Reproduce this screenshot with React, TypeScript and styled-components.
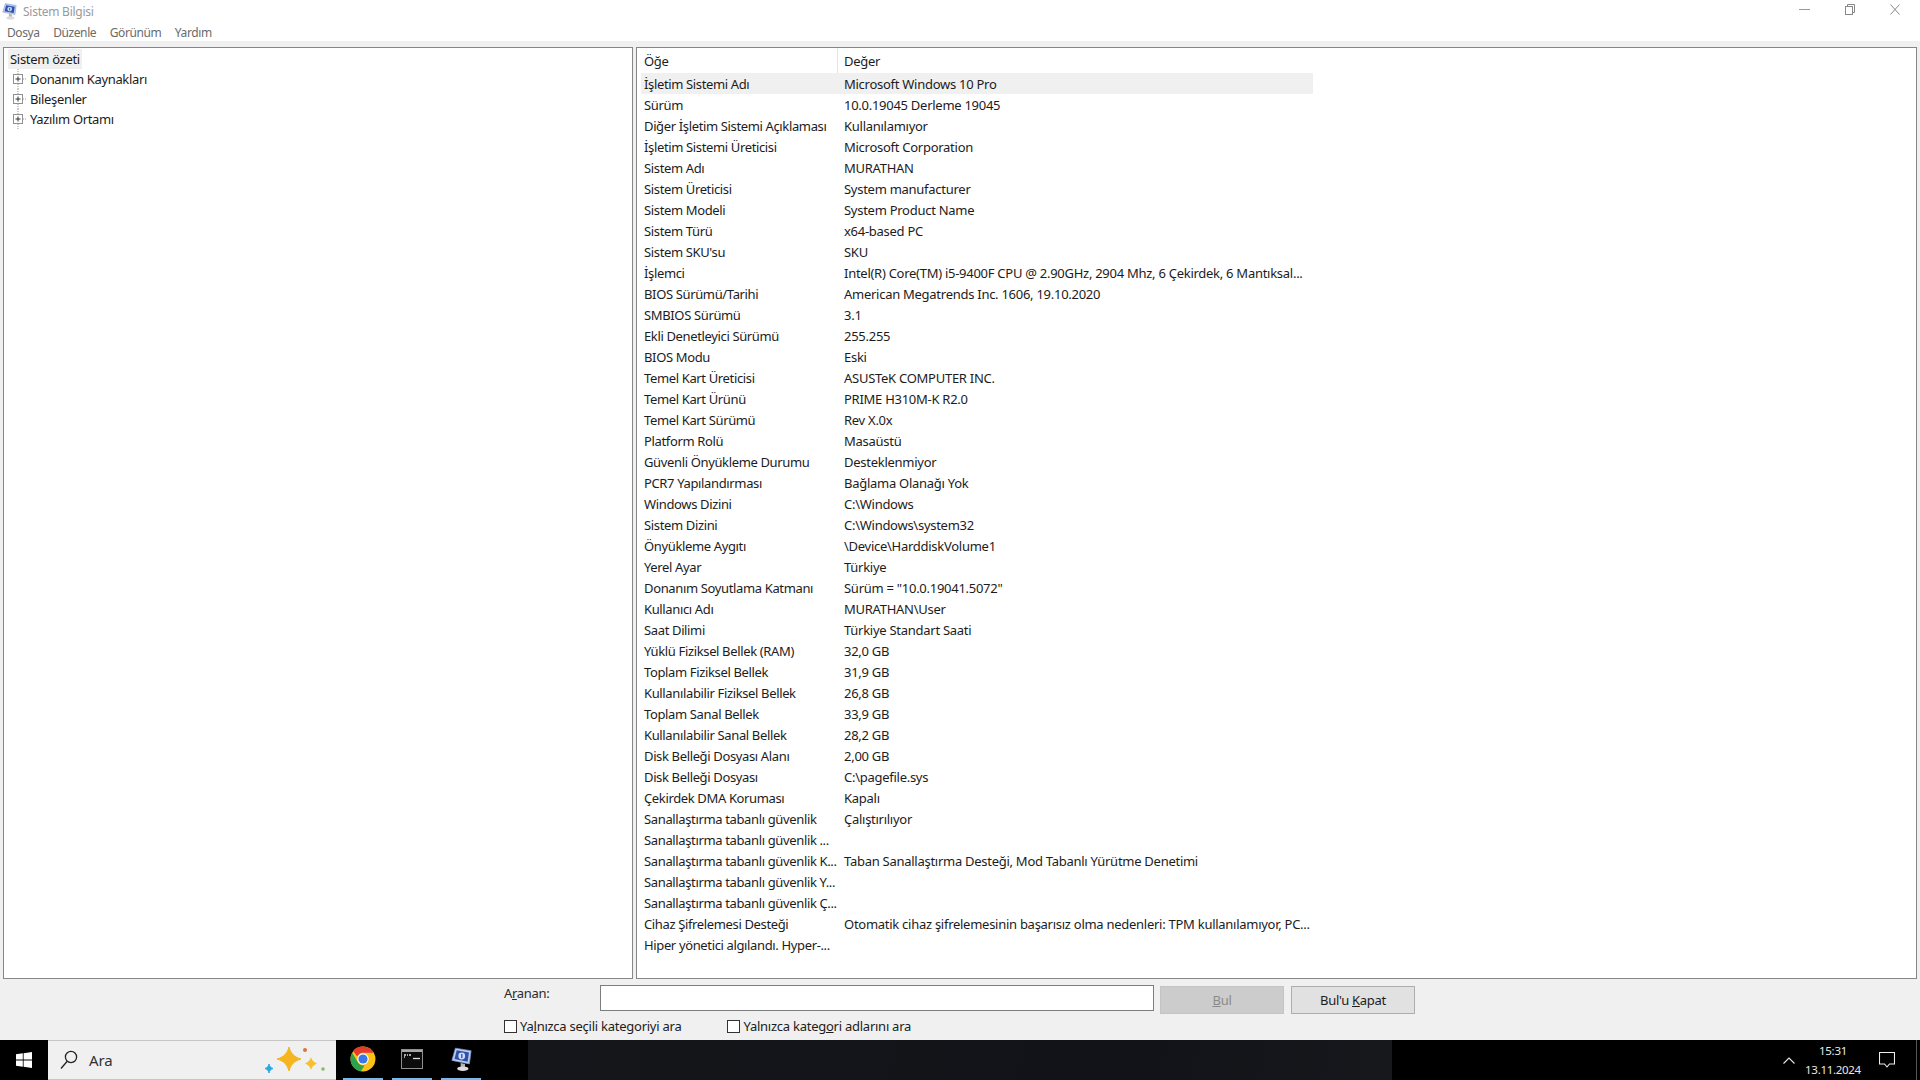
import React from "react";
import styled, { createGlobalStyle } from "styled-components";

const Global = createGlobalStyle`
  html, body { margin: 0; padding: 0; height: 100%; background: #f0f0f0; }
  #root { height: 100%; }
  * { box-sizing: border-box; }
`;

const Page = styled.div`
  width: 1920px;
  height: 1080px;
  display: flex;
  flex-direction: column;
  overflow: hidden;
  background: #f0f0f0;
  color: #1c1c1c;
  font-family: "Noto Sans", "Open Sans", sans-serif;
  font-size: 13px;
  letter-spacing: -0.3px;
`;

const TitleBar = styled.div`
  height: 23px;
  background: #fff;
  display: flex;
  align-items: center;
  padding-left: 2px;
  flex: none;
`;

const TitleText = styled.span`
  margin-left: 6px;
  color: #9a9a9a;
  font-size: 12px;
  letter-spacing: -0.25px;
`;

const WindowControls = styled.div`
  margin-left: auto;
  display: flex;
  align-items: center;
  height: 100%;
  padding: 0 20px 4px 0;
  gap: 35px;
`;

const MenuBar = styled.div`
  height: 18px;
  background: #fff;
  display: flex;
  align-items: center;
  padding-left: 7px;
  gap: 13.5px;
  flex: none;
`;

const MenuItem = styled.span`
  color: #6a6a6a;
  font-size: 12px;
  letter-spacing: -0.4px;
`;

const Panes = styled.div`
  margin-top: 6px;
  height: 932px;
  display: flex;
  gap: 3px;
  padding: 0 3px;
  flex: none;
`;

const TreePane = styled.div`
  width: 630px;
  background: #fff;
  border: 1px solid #868686;
  padding: 1px 0 0 5px;
  flex: none;
`;

const TreeRoot = styled.div`
  display: inline-block;
  height: 20px;
  line-height: 20px;
  background: #f0f0f0;
  padding: 0 2px;
  margin-left: -1px;
`;

const TreeNode = styled.div`
  height: 20px;
  display: flex;
  align-items: center;
  margin-left: -4px;
  padding-left: 1px;
  gap: 6px;
  letter-spacing: -0.35px;
`;

const DetailPane = styled.div`
  flex: 1;
  background: #fff;
  border: 1px solid #868686;
  padding: 0 0 0 4px;
`;

const Table = styled.div`
  width: 672px;
`;

const HeaderRow = styled.div`
  display: grid;
  grid-template-columns: 196px 1fr;
  height: 25px;
  align-items: center;
  margin-left: -4px;
  padding-left: 4px;
`;

const HeaderCell = styled.div<{ $divider?: boolean }>`
  height: 100%;
  display: flex;
  align-items: center;
  padding-left: ${(p) => (p.$divider ? "6px" : "3px")};
  border-left: ${(p) => (p.$divider ? "1px solid #e5e5e5" : "none")};
`;

const Row = styled.div<{ $selected?: boolean }>`
  display: grid;
  grid-template-columns: 196px 1fr;
  height: 21px;
  align-items: center;
  background: ${(p) => (p.$selected ? "#f0f0f0" : "transparent")};
`;

const NameCell = styled.div`
  padding-left: 3px;
  white-space: nowrap;
  letter-spacing: -0.36px;
`;

const ValueCell = styled.div`
  padding-left: 7px;
  white-space: nowrap;
  letter-spacing: -0.27px;
`;

const FindBar = styled.div`
  flex: none;
  height: 61px;
  padding: 6px 0 0 504px;
  display: flex;
  flex-direction: column;
`;

const FindTop = styled.div`
  display: flex;
  align-items: flex-start;
`;

const FindLabel = styled.label`
  width: 96px;
  margin-top: -1px;
  color: #2b2b2b;
`;

const FindInput = styled.input`
  width: 554px;
  height: 26px;
  border: 1px solid #7d7d7d;
  background: #fff;
  padding: 0 4px;
  outline: none;
`;

const Button = styled.button<{ $disabled?: boolean }>`
  width: 124px;
  height: 28px;
  margin-left: ${(p) => (p.$disabled ? "6px" : "7px")};
  font: inherit;
  letter-spacing: inherit;
  background: ${(p) => (p.$disabled ? "#cccccc" : "#e1e1e1")};
  border: 1px solid ${(p) => (p.$disabled ? "#c4c4c4" : "#adadad")};
  color: ${(p) => (p.$disabled ? "#8a8a8a" : "#1c1c1c")};
  padding: 0;
  margin-top: 1px;
`;

const FindBottom = styled.div`
  display: flex;
  margin-top: 2px;
  gap: 46px;
  height: 20px;
  letter-spacing: -0.25px;
`;

const CheckLabel = styled.label`
  display: flex;
  align-items: center;
  gap: 3px;
`;

const CheckBox = styled.span`
  width: 13px;
  height: 13px;
  background: #fff;
  border: 1px solid #333;
  flex: none;
`;

const Mnemonic = styled.span`
  text-decoration: underline;
`;

const Taskbar = styled.div`
  flex: none;
  height: 40px;
  background: #000;
  display: flex;
  align-items: stretch;
`;

const StartButton = styled.div`
  width: 48px;
  display: flex;
  align-items: center;
  justify-content: center;
  flex: none;
`;

const SearchBox = styled.div`
  width: 288px;
  background: #f0f0f0;
  border-top: 1px solid #c6c6c6;
  border-bottom: 1px solid #c6c6c6;
  display: flex;
  align-items: center;
  padding: 0 6px 0 12px;
  flex: none;
`;

const SearchText = styled.span`
  margin-left: 11px;
  font-size: 15px;
  color: #333;
  letter-spacing: -0.1px;
`;

const SparkleWrap = styled.div`
  margin-left: auto;
  display: flex;
  align-items: center;
`;

const TaskGroup = styled.div`
  display: flex;
  gap: 9px;
  margin-left: 7px;
  width: 185px;
  flex: none;
`;

const TaskButton = styled.div`
  width: 40px;
  display: flex;
  align-items: center;
  justify-content: center;
  border-bottom: 2px solid #76b9ed;
`;

const DarkZone = styled.div`
  width: 864px;
  flex: none;
  background: linear-gradient(100deg, #14161a 0%, #111318 70%, #16181c 100%);
`;

const Tray = styled.div`
  flex: 1;
  display: flex;
  align-items: center;
`;

const Chevron = styled.div`
  margin-left: 391px;
  display: flex;
`;

const Clock = styled.div`
  margin-left: 8px;
  width: 60px;
  color: #e8e8e8;
  font-size: 11.5px;
  line-height: 19px;
  text-align: center;
  letter-spacing: -0.3px;
`;

const Notify = styled.div`
  margin-left: 16px;
  display: flex;
`;

const ShowDesktop = styled.div`
  margin-left: auto;
  width: 4px;
  height: 100%;
  border-left: 1px solid #555;
`;

const rows: [string, string][] = [
  ["İşletim Sistemi Adı", "Microsoft Windows 10 Pro"],
  ["Sürüm", "10.0.19045 Derleme 19045"],
  ["Diğer İşletim Sistemi Açıklaması", "Kullanılamıyor"],
  ["İşletim Sistemi Üreticisi", "Microsoft Corporation"],
  ["Sistem Adı", "MURATHAN"],
  ["Sistem Üreticisi", "System manufacturer"],
  ["Sistem Modeli", "System Product Name"],
  ["Sistem Türü", "x64-based PC"],
  ["Sistem SKU'su", "SKU"],
  ["İşlemci", "Intel(R) Core(TM) i5-9400F CPU @ 2.90GHz, 2904 Mhz, 6 Çekirdek, 6 Mantıksal..."],
  ["BIOS Sürümü/Tarihi", "American Megatrends Inc. 1606, 19.10.2020"],
  ["SMBIOS Sürümü", "3.1"],
  ["Ekli Denetleyici Sürümü", "255.255"],
  ["BIOS Modu", "Eski"],
  ["Temel Kart Üreticisi", "ASUSTeK COMPUTER INC."],
  ["Temel Kart Ürünü", "PRIME H310M-K R2.0"],
  ["Temel Kart Sürümü", "Rev X.0x"],
  ["Platform Rolü", "Masaüstü"],
  ["Güvenli Önyükleme Durumu", "Desteklenmiyor"],
  ["PCR7 Yapılandırması", "Bağlama Olanağı Yok"],
  ["Windows Dizini", "C:\\Windows"],
  ["Sistem Dizini", "C:\\Windows\\system32"],
  ["Önyükleme Aygıtı", "\\Device\\HarddiskVolume1"],
  ["Yerel Ayar", "Türkiye"],
  ["Donanım Soyutlama Katmanı", "Sürüm = \"10.0.19041.5072\""],
  ["Kullanıcı Adı", "MURATHAN\\User"],
  ["Saat Dilimi", "Türkiye Standart Saati"],
  ["Yüklü Fiziksel Bellek (RAM)", "32,0 GB"],
  ["Toplam Fiziksel Bellek", "31,9 GB"],
  ["Kullanılabilir Fiziksel Bellek", "26,8 GB"],
  ["Toplam Sanal Bellek", "33,9 GB"],
  ["Kullanılabilir Sanal Bellek", "28,2 GB"],
  ["Disk Belleği Dosyası Alanı", "2,00 GB"],
  ["Disk Belleği Dosyası", "C:\\pagefile.sys"],
  ["Çekirdek DMA Koruması", "Kapalı"],
  ["Sanallaştırma tabanlı güvenlik", "Çalıştırılıyor"],
  ["Sanallaştırma tabanlı güvenlik ...", ""],
  ["Sanallaştırma tabanlı güvenlik K...", "Taban Sanallaştırma Desteği, Mod Tabanlı Yürütme Denetimi"],
  ["Sanallaştırma tabanlı güvenlik Y...", ""],
  ["Sanallaştırma tabanlı güvenlik Ç...", ""],
  ["Cihaz Şifrelemesi Desteği", "Otomatik cihaz şifrelemesinin başarısız olma nedenleri: TPM kullanılamıyor, PC..."],
  ["Hiper yönetici algılandı. Hyper-...", ""],
];

const InfoIcon = ({ w, h }: { w: number; h: number }) => (
  <svg width={w} height={h} viewBox="0 0 24 28">
    <path d="M5 1 L23 4 L21 19 L1 15 Z" fill="#b9cdec" stroke="#7f97c4" strokeWidth="0.8" />
    <path d="M6.5 3.5 L20.5 6 L19 16.5 L4 13.5 Z" fill="#2c4fb0" />
    <circle cx="12.3" cy="10" r="3.9" fill="#cfdcf5" />
    <rect x="11.6" y="7.6" width="1.5" height="4.8" fill="#2c4fb0" />
    <path d="M11 18 L16 19 L16 23 L11 23 Z" fill="#b3b3b3" />
    <ellipse cx="13.5" cy="24.5" rx="6.5" ry="2.6" fill="#dcdcdc" />
  </svg>
);

const PlusBox = () => (
  <svg width="20" height="20" viewBox="0 0 20 20" style={{ marginRight: -2, flex: "none" }}>
    <rect x="7.5" y="5.5" width="9" height="9" fill="#fff" stroke="#919191" />
    <path d="M9.5 10h5M12 7.5v5" stroke="#333" />
    <path d="M17 10h4" stroke="#999" strokeDasharray="1 1" />
    <path d="M12 0v5M12 15v5" stroke="#999" strokeDasharray="1 1" />
  </svg>
);

const WinLogo = () => (
  <svg width="16" height="16" viewBox="0 0 16 16" fill="#fff">
    <path d="M0 2.3 6.8 1.3v6.3H0zM7.6 1.2 16 0v7.6H7.6zM0 8.4h6.8v6.3L0 13.7zM7.6 8.4H16V16l-8.4-1.2z" />
  </svg>
);

const Sparkles = () => (
  <svg width="66" height="34" viewBox="0 0 66 34">
    <path d="M25 4 C26.5 10 30 14 37 16 C30 18 26.5 22 25 28 C23.5 22 20 18 13 16 C20 14 23.5 10 25 4Z" fill="#f5b51e" stroke="#f5b51e" strokeLinejoin="round" />
    <path d="M47 14 C48 17.5 49.5 19 53 20.5 C49.5 22 48 23.5 47 27 C46 23.5 44.5 22 41 20.5 C44.5 19 46 17.5 47 14Z" fill="#f7c02a" />
    <circle cx="41" cy="7" r="2" fill="#d9743c" />
    <circle cx="59" cy="26" r="1.8" fill="#86bd5a" />
    <path d="M5 21 C5.5 23.5 6.5 24.5 9 25.5 C6.5 26.5 5.5 27.5 5 30 C4.5 27.5 3.5 26.5 1 25.5 C3.5 24.5 4.5 23.5 5 21Z" fill="#2aa8e0" stroke="#2aa8e0" />
  </svg>
);

const ChromeIcon = () => (
  <svg width="26" height="26" viewBox="0 0 48 48">
    <circle cx="24" cy="24" r="23" fill="#fbc116" />
    <path d="M24 1a23 23 0 0 1 20 11.5H24a11.5 11.5 0 0 0-10.6 7L5.5 9A23 23 0 0 1 24 1z" fill="#e33b2e" />
    <path d="M4 12.5 15.5 32a11.5 11.5 0 0 0 11.7 3.5L20 46.7A23 23 0 0 1 4 12.5z" fill="#2ba24c" />
    <circle cx="24" cy="24" r="10.5" fill="#fff" />
    <circle cx="24" cy="24" r="8.5" fill="#3b78e7" />
  </svg>
);

const CmdIcon = () => (
  <svg width="22" height="20" viewBox="0 0 22 20">
    <rect x="0.5" y="0.5" width="21" height="19" fill="#0c0c0c" stroke="#8f8f8f" />
    <rect x="1" y="1" width="20" height="2" fill="#a8a8a8" />
    <path d="M3 6h2M6 6h1M8 6h2M3 8h1" stroke="#ddd" strokeWidth="1.3" />
    <path d="M12 9.5h7" stroke="#ddd" strokeWidth="1.3" />
  </svg>
);

export default function App() {
  return (
    <Page>
      <Global />
      <TitleBar>
        <InfoIcon w={15} h={17} />
        <TitleText>Sistem Bilgisi</TitleText>
        <WindowControls>
          <svg width="11" height="11" viewBox="0 0 11 11"><path d="M0 5.5h11" stroke="#999" /></svg>
          <svg width="10" height="11" viewBox="0 0 10 11" fill="none" stroke="#888"><rect x=".5" y="2.5" width="7" height="8" /><path d="M2.5 2.5v-2h7v8h-2" /></svg>
          <svg width="10" height="11" viewBox="0 0 10 11"><path d="M.5.5l9 10M9.5.5l-9 10" stroke="#888" /></svg>
        </WindowControls>
      </TitleBar>
      <MenuBar>
        <MenuItem>Dosya</MenuItem>
        <MenuItem>Düzenle</MenuItem>
        <MenuItem>Görünüm</MenuItem>
        <MenuItem>Yardım</MenuItem>
      </MenuBar>
      <Panes>
        <TreePane>
          <TreeRoot>Sistem özeti</TreeRoot>
          {["Donanım Kaynakları", "Bileşenler", "Yazılım Ortamı"].map((t) => (
            <TreeNode key={t}><PlusBox />{t}</TreeNode>
          ))}
        </TreePane>
        <DetailPane>
          <Table>
            <HeaderRow>
              <HeaderCell>Öğe</HeaderCell>
              <HeaderCell $divider>Değer</HeaderCell>
            </HeaderRow>
            {rows.map(([n, v], i) => (
              <Row key={i} $selected={i === 0}>
                <NameCell>{n}</NameCell>
                <ValueCell>{v}</ValueCell>
              </Row>
            ))}
          </Table>
        </DetailPane>
      </Panes>
      <FindBar>
        <FindTop>
          <FindLabel>A<Mnemonic>r</Mnemonic>anan:</FindLabel>
          <FindInput />
          <Button $disabled><Mnemonic>B</Mnemonic>ul</Button>
          <Button>Bul'u <Mnemonic>K</Mnemonic>apat</Button>
        </FindTop>
        <FindBottom>
          <CheckLabel><CheckBox /><span>Ya<Mnemonic>l</Mnemonic>nızca seçili kategoriyi ara</span></CheckLabel>
          <CheckLabel><CheckBox /><span>Yalnızca kateg<Mnemonic>o</Mnemonic>ri adlarını ara</span></CheckLabel>
        </FindBottom>
      </FindBar>
      <Taskbar>
        <StartButton><WinLogo /></StartButton>
        <SearchBox>
          <svg width="18" height="20" viewBox="0 0 18 20" fill="none" stroke="#222" strokeWidth="1.3">
            <circle cx="11" cy="7" r="5.6" />
            <path d="M7 11.5 1 18.5" />
          </svg>
          <SearchText>Ara</SearchText>
          <SparkleWrap><Sparkles /></SparkleWrap>
        </SearchBox>
        <TaskGroup>
          <TaskButton><ChromeIcon /></TaskButton>
          <TaskButton><CmdIcon /></TaskButton>
          <TaskButton><InfoIcon w={21} h={25} /></TaskButton>
        </TaskGroup>
        <DarkZone />
        <Tray>
          <Chevron>
            <svg width="12" height="7" viewBox="0 0 12 7" fill="none" stroke="#e8e8e8" strokeWidth="1.1"><path d="M.5 6.5 6 1l5.5 5.5" /></svg>
          </Chevron>
          <Clock>15:31<br />13.11.2024</Clock>
          <Notify>
            <svg width="16" height="16" viewBox="0 0 16 16" fill="none" stroke="#eee" strokeWidth="1.1"><path d="M.5.5h15v11.5h-5L8 15l-2.5-3h-5z" /></svg>
          </Notify>
          <ShowDesktop />
        </Tray>
      </Taskbar>
    </Page>
  );
}
